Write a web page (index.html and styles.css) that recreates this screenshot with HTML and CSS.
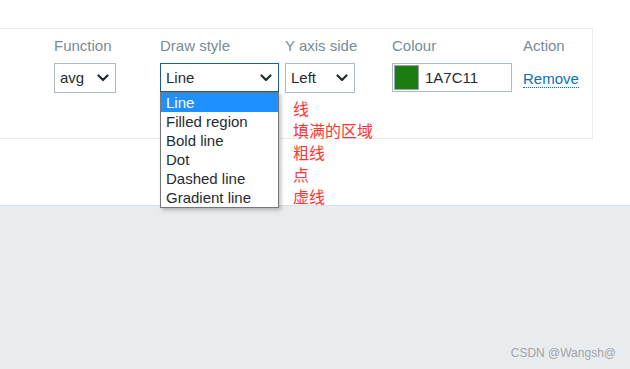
FILE: index.html
```html
<!DOCTYPE html>
<html>
<head>
<meta charset="utf-8">
<link rel="stylesheet" href="styles.css">
</head>
<body>
<div class="top">
  <div class="panel">
    <div class="cell c-func">
      <div class="label">Function</div>
      <div class="select w-func"><span>avg</span><svg class="chev" viewBox="0 0 12 8"><path d="M1.5 1.5 L6 6 L10.5 1.5" /></svg></div>
    </div>
    <div class="cell c-draw">
      <div class="label">Draw style</div>
      <div class="select w-draw focus"><span>Line</span><svg class="chev" viewBox="0 0 12 8"><path d="M1.5 1.5 L6 6 L10.5 1.5" /></svg></div>
      <ul class="dropdown">
        <li class="sel">Line</li>
        <li>Filled region</li>
        <li>Bold line</li>
        <li>Dot</li>
        <li>Dashed line</li>
        <li>Gradient line</li>
      </ul>
    </div>
    <div class="cell c-axis">
      <div class="label">Y axis side</div>
      <div class="select w-axis"><span>Left</span><svg class="chev" viewBox="0 0 12 8"><path d="M1.5 1.5 L6 6 L10.5 1.5" /></svg></div>
      <div class="notes">
        <div>线</div>
        <div>填满的区域</div>
        <div>粗线</div>
        <div>点</div>
        <div>虚线</div>
      </div>
    </div>
    <div class="cell c-colour">
      <div class="label">Colour</div>
      <div class="colour"><span class="swatch"></span><span>1A7C11</span></div>
    </div>
    <div class="cell c-action">
      <div class="label">Action</div>
      <div class="actionrow"><a class="remove">Remove</a></div>
    </div>
  </div>
</div>
<div class="bottom">
  <div class="mark">CSDN @Wangsh@</div>
</div>
</body>
</html>
```
FILE: styles.css
```css
* { box-sizing: border-box; }
html, body { margin: 0; padding: 0; }
body {
  width: 630px;
  height: 369px;
  overflow: hidden;
  background: #e9ecef;
  font-family: Arial, "Liberation Sans", "Noto Sans CJK SC", sans-serif;
  font-size: 15px;
  color: #1f2c33;
}
.top {
  background: #fff;
  height: 206px;
  padding-top: 28px;
  border-bottom: 1px solid #dde2e6;
}
.panel {
  width: 593px;
  height: 111px;
  border: 1px solid #ebebeb;
  border-left: none;
  display: grid;
  grid-template-columns: 106px 125px 107px 131px auto;
  padding-left: 54px;
  padding-top: 8px;
}
.cell { position: relative; }
.label {
  color: #768d99;
  height: 26px;
  line-height: 18px;
}
.select {
  height: 30px;
  border: 1px solid #acbbc2;
  display: flex;
  align-items: center;
  justify-content: space-between;
  padding: 0 6px 0 5px;
  background: #fff;
}
.select span { line-height: 16px; }
.select.focus { border-color: #1f5e8c; }
.w-func { width: 62px; }
.w-draw { width: 119px; height: 29px; }
.w-axis { width: 70px; }
.chev { width: 12px; height: 8px; }
.chev path { fill: none; stroke: #1f2c33; stroke-width: 2.2; stroke-linecap: round; stroke-linejoin: round; }
.dropdown {
  position: absolute;
  left: 0;
  top: 55px;
  width: 119px;
  margin: 0;
  padding: 0;
  list-style: none;
  background: #fff;
  border: 1px solid #767676;
  box-shadow: 2px 2px 4px rgba(0,0,0,0.25);
  z-index: 5;
}
.dropdown li {
  height: 19px;
  line-height: 19px;
  padding-left: 5px;
  color: #1f2c33;
}
.dropdown li.sel { background: #1e90ff; color: #fff; }
.notes {
  position: absolute;
  left: 8px;
  top: 60px;
  color: #ff3535;
  font-size: 16px;
  line-height: 22px;
  font-family: "Noto Sans CJK SC", sans-serif;
  z-index: 4;
  white-space: nowrap;
}
.colour {
  width: 120px;
  height: 29px;
  border: 1px solid #acbbc2;
  display: flex;
  align-items: center;
  gap: 6px;
  padding-left: 1px;
}
.swatch {
  width: 25px;
  height: 25px;
  background: #1a7c11;
  border: 1px solid #9aa6ab;
}
.actionrow {
  height: 30px;
  display: flex;
  align-items: center;
}
.remove {
  color: #0b70b7;
  text-decoration: none;
  border-bottom: 1px dotted #0b70b7;
  line-height: 16px;
  margin-top: 2px;
}
.bottom {
  height: 163px;
  display: flex;
  justify-content: flex-end;
  align-items: flex-end;
  padding: 0 14px 9px 0;
}
.mark {
  color: #a3a5a8;
  font-size: 12px;
}
```
